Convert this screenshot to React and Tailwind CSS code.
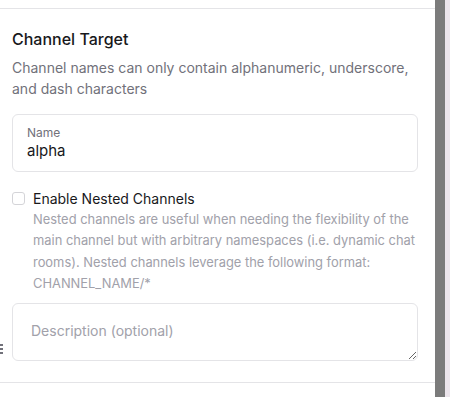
export default function App() {
  return (
    <div className="flex h-[397px] w-[450px] overflow-hidden bg-white" style={{ fontFamily: 'Inter, "Noto Sans", sans-serif' }}>
      <div className="relative flex w-[435px] flex-col">
        <div className="h-[9px] border-b border-[#e4e4e7]" />
        <div className="px-3 pt-[18px]">
          <h2 className="text-[16px] font-medium leading-6 text-[#18181b]">Channel Target</h2>
          <p className="mt-[6px] text-[14px] leading-[21px] text-[#71717a]">
            Channel names can only contain alphanumeric, underscore, and dash characters
          </p>
          <div className="mt-[15px] flex h-[58px] w-[406px] flex-col justify-center rounded-[6px] border border-[#e4e4e7] px-[14px]">
            <span className="text-[12px] leading-4 text-[#71717a]">Name</span>
            <span className="text-[15px] leading-5 text-[#18181b]">alpha</span>
          </div>
          <div className="mt-[17px] flex gap-[8px]">
            <div className="mt-[3px] h-[13px] w-[13px] shrink-0 rounded-[3px] border border-[#d4d4d8]" />
            <div>
              <div className="text-[14px] leading-[20px] text-[#18181b]">Enable Nested Channels</div>
              <p className="text-[12.9px] leading-[21.3px] text-[#a1a1aa]">
                Nested channels are useful when needing the flexibility of the main channel but with arbitrary namespaces (i.e. dynamic chat rooms). Nested channels leverage the following format: CHANNEL_NAME/*
              </p>
            </div>
          </div>
          <textarea
            placeholder="Description (optional)"
            className="mt-[9px] block h-[58px] w-[406px] resize-y rounded-[6px] border border-[#e4e4e7] px-[18px] py-[17px] text-[14px] leading-5 text-[#18181b] outline-none placeholder:text-[#a1a1aa]"
          />
        </div>
        <div className="mt-[21px] border-b border-[#e4e4e7]" />
        <div className="absolute left-0 top-[344px] grid grid-cols-1 gap-[2px]">
          <span className="h-[2px] w-[3px] bg-[#71717a]" />
          <span className="h-[2px] w-[3px] bg-[#71717a]" />
          <span className="h-[2px] w-[3px] bg-[#71717a]" />
        </div>
      </div>
      <div className="w-[10px] bg-[#7b7b7b]" />
      <div className="flex-1 bg-[#ebe4eb]" />
    </div>
  );
}
